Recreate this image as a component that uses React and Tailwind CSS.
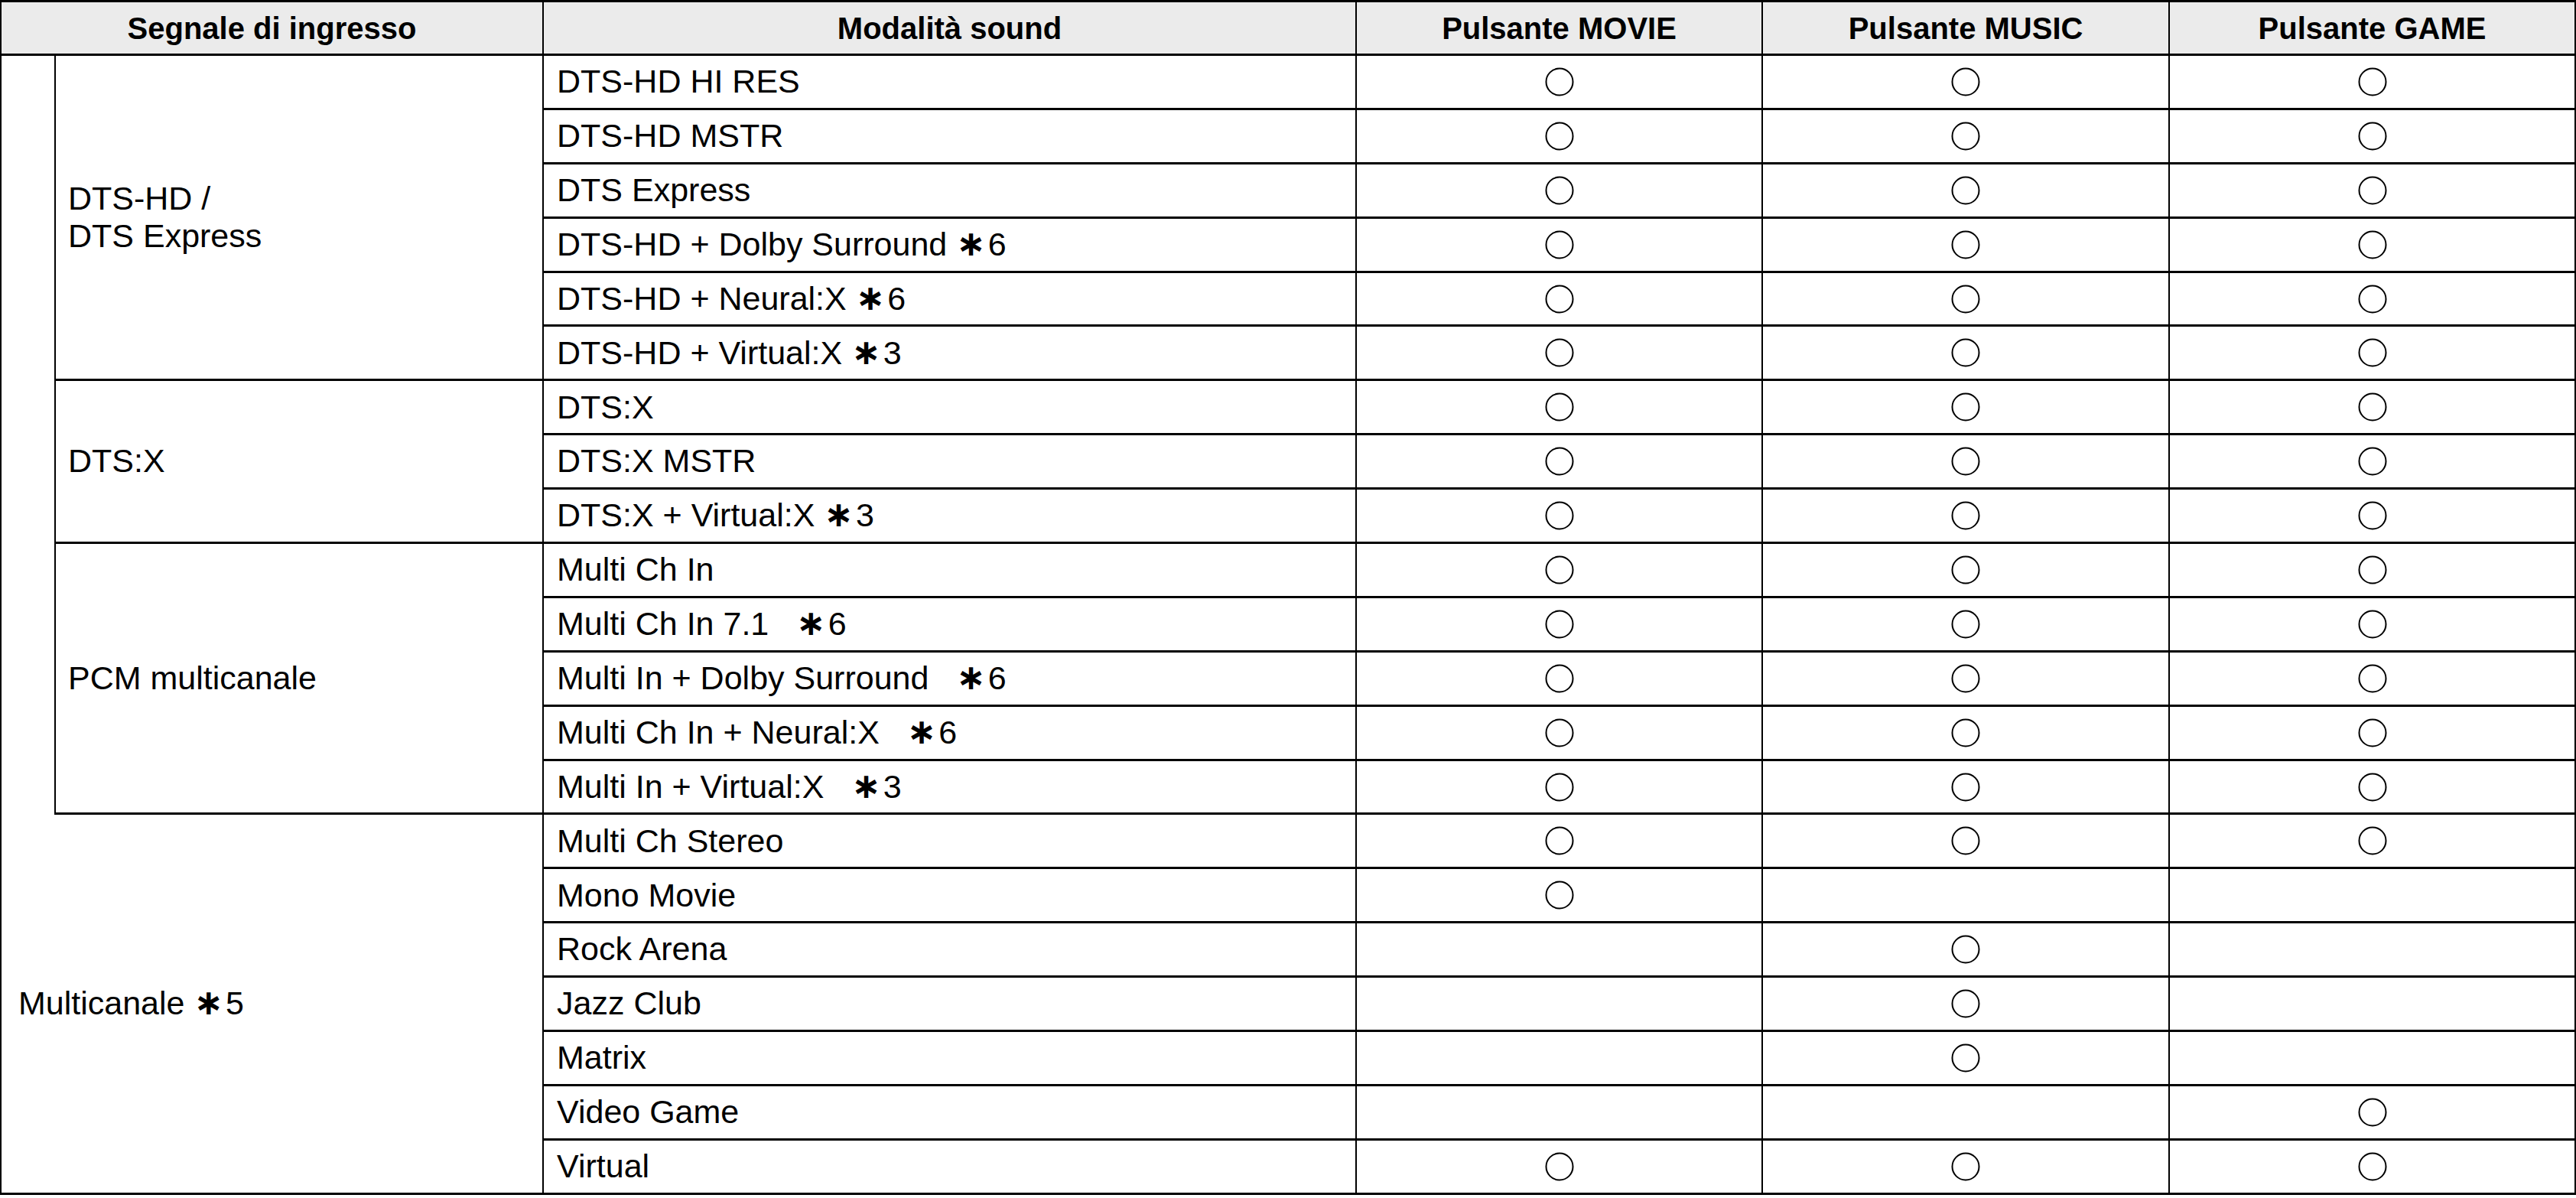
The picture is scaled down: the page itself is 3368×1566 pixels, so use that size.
import React from 'react';

// righe della tabella: nome modalità + [MOVIE, MUSIC, GAME]
const righe = [
  { modo: 'DTS-HD HI RES', tasti: [1, 1, 1] },
  { modo: 'DTS-HD MSTR', tasti: [1, 1, 1] },
  { modo: 'DTS Express', tasti: [1, 1, 1] },
  { modo: 'DTS-HD + Dolby Surround ', nota: '6', tasti: [1, 1, 1] },
  { modo: 'DTS-HD + Neural:X ', nota: '6', tasti: [1, 1, 1] },
  { modo: 'DTS-HD + Virtual:X ', nota: '3', tasti: [1, 1, 1] },
  { modo: 'DTS:X', tasti: [1, 1, 1] },
  { modo: 'DTS:X MSTR', tasti: [1, 1, 1] },
  { modo: 'DTS:X + Virtual:X ', nota: '3', tasti: [1, 1, 1] },
  { modo: 'Multi Ch In', tasti: [1, 1, 1] },
  { modo: 'Multi Ch In 7.1   ', nota: '6', tasti: [1, 1, 1] },
  { modo: 'Multi In + Dolby Surround   ', nota: '6', tasti: [1, 1, 1] },
  { modo: 'Multi Ch In + Neural:X   ', nota: '6', tasti: [1, 1, 1] },
  { modo: 'Multi In + Virtual:X   ', nota: '3', tasti: [1, 1, 1] },
  { modo: 'Multi Ch Stereo', tasti: [1, 1, 1] },
  { modo: 'Mono Movie', tasti: [1, 0, 0] },
  { modo: 'Rock Arena', tasti: [0, 1, 0] },
  { modo: 'Jazz Club', tasti: [0, 1, 0] },
  { modo: 'Matrix', tasti: [0, 1, 0] },
  { modo: 'Video Game', tasti: [0, 0, 1] },
  { modo: 'Virtual', tasti: [1, 1, 1] },
];

// gruppi di segnale (indice riga di partenza -> cella con rowSpan)
const gruppi = {
  0: { testo: ['DTS-HD /', 'DTS Express'], span: 6 },
  6: { testo: ['DTS:X'], span: 3 },
  9: { testo: ['PCM multicanale'], span: 5 },
};

function Cerchio() {
  return (
    <svg width="38" height="38" viewBox="0 0 38 38" className="block mx-auto">
      <circle cx="19" cy="19" r="17.5" fill="none" stroke="#000" strokeWidth="2" />
    </svg>
  );
}

function Asterisco() {
  return (
    <span className="font-['DejaVu_Sans',sans-serif] font-bold text-[46px] leading-none mr-[3px]">∗</span>
  );
}

export default function App() {
  const th = 'bg-[#ebebeb] border-x-2 border-y-[3px] border-black font-bold text-[40px] text-center align-middle';
  const td = 'border-x-2 border-y-[3px] border-black align-middle';

  return (
    <div className="bg-white w-[3368px] h-[1566px] font-['Liberation_Sans',Arial,sans-serif] text-black">
      <table className="table-fixed border-collapse w-[3366px]">
        <colgroup>
          <col className="w-[71px]" />
          <col className="w-[638px]" />
          <col className="w-[1063px]" />
          <col className="w-[531px]" />
          <col className="w-[532px]" />
          <col className="w-[531px]" />
        </colgroup>
        <thead>
          <tr className="h-[70px]">
            <th colSpan={2} className={th}>Segnale di ingresso</th>
            <th className={th}>Modalità sound</th>
            <th className={th}>Pulsante MOVIE</th>
            <th className={th}>Pulsante MUSIC</th>
            <th className={th}>Pulsante GAME</th>
          </tr>
        </thead>
        <tbody className="text-[43px] leading-[1.15]">
          {righe.map((r, i) => (
            <tr key={i} className="h-[70.9px]">
              {i === 0 && (
                <td rowSpan={14} className="border-l-2 border-r-2 border-black"></td>
              )}
              {gruppi[i] && (
                <td rowSpan={gruppi[i].span} className={td + ' pl-[16px]'}>
                  {gruppi[i].testo.map((t) => (
                    <div key={t}>{t}</div>
                  ))}
                </td>
              )}
              {i === 14 && (
                <td rowSpan={7} colSpan={2} className="border-l-2 border-r-2 border-b-[3px] border-black align-middle pl-[22px]">
                  Multicanale <Asterisco />5
                </td>
              )}
              <td className={td + ' pl-[17px] whitespace-pre'}>
                {r.modo}
                {r.nota && (
                  <>
                    <Asterisco />
                    {r.nota}
                  </>
                )}
              </td>
              {r.tasti.map((t, j) => (
                <td key={j} className={td}>
                  {t ? <Cerchio /> : null}
                </td>
              ))}
            </tr>
          ))}
        </tbody>
      </table>
    </div>
  );
}
